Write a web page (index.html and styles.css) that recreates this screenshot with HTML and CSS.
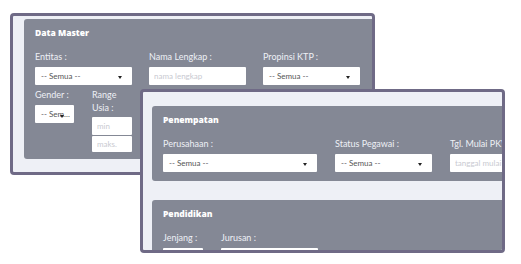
FILE: index.html
```html
<!DOCTYPE html>
<html>
<head>
<meta charset="utf-8">
<title>Filter Karyawan</title>
<link rel="stylesheet" href="styles.css">
</head>
<body>
    <div class="desk">
        <div class="win win1">
            <div class="panel">
                <h3>Data Master</h3>
                <div class="row">
                    <div class="field w97">
                        <label>Entitas :</label>
                        <div class="sel"><span>-- Semua --</span><i></i></div>
                    </div>
                    <div class="field w97">
                        <label>Nama Lengkap :</label>
                        <input type="text" placeholder="nama lengkap">
                    </div>
                    <div class="field w97">
                        <label>Propinsi KTP :</label>
                        <div class="sel"><span>-- Semua --</span><i></i></div>
                    </div>
                </div>
                <div class="row row2">
                    <div class="field gender">
                        <label>Gender :</label>
                        <div class="sel small"><span>-- Sem...</span><i></i></div>
                    </div>
                    <div class="field usia">
                        <label>Range<br>Usia :</label>
                        <input type="text" placeholder="min">
                        <input type="text" placeholder="maks.">
                    </div>
                </div>
            </div>
        </div>
        <div class="win win2">
            <div class="panel">
                <h3>Penempatan</h3>
                <div class="row">
                    <div class="field w154">
                        <label>Perusahaan :</label>
                        <div class="sel"><span>-- Semua --</span><i></i></div>
                    </div>
                    <div class="field w97">
                        <label>Status Pegawai :</label>
                        <div class="sel"><span>-- Semua --</span><i></i></div>
                    </div>
                    <div class="field w97">
                        <label>Tgl. Mulai PKWT :</label>
                        <input type="text" placeholder="tanggal mulai">
                    </div>
                </div>
            </div>
            <div class="panel">
                <h3>Pendidikan</h3>
                <div class="row">
                    <div class="field w40">
                        <label>Jenjang :</label>
                        <input type="text">
                    </div>
                    <div class="field w97">
                        <label>Jurusan :</label>
                        <input type="text">
                    </div>
                </div>
            </div>
        </div>
    </div>
</body>
</html>
```
FILE: styles.css
```css
*{
    box-sizing: border-box;
    font-family: 'Lato', sans-serif;
}
body{
    margin:0;
    background:#fff;
}
.desk{
    position:relative;
    width:521px;
    height:264px;
    overflow:hidden;
}
.win{
    position:absolute;
    background:#eef0f6;
    border:3px solid #6f6a86;
    border-radius:4px;
    overflow:hidden;
}
.win1{
    left:10px;
    top:13px;
    width:365px;
    height:162px;
    padding:3px 0 0 11px;
}
.win2{
    left:140px;
    top:89px;
    width:365px;
    height:164px;
    padding:14px 0 0 9px;
    z-index:2;
}
.panel{
    width:420px;
    background:#848895;
    border-radius:3px;
    padding:8px 0 0 11px;
    color:#f2f2f6;
}
.win1 .panel{
    height:140px;
}
.win2 .panel{
    height:75px;
    margin-bottom:19px;
}
.win2 .panel:last-child{
    height:80px;
}
h3{
    margin:0;
    font-family:'Open Sans', sans-serif;
    font-size:8.5px;
    font-weight:800;
    line-height:12px;
    color:#fff;
}
.row{
    display:flex;
    gap:17px;
    margin-top:11px;
}
.row2{
    margin-top:3px;
    gap:18px;
}
.win2 .row{
    gap:18px;
}
.field{
    display:flex;
    flex-direction:column;
    flex:none;
}
.w97{ width:97px; }
.w154{ width:154px; }
.w40{ width:40px; }
.gender{ width:39px; }
.usia{ width:40px; }
label{
    font-size:9px;
    line-height:13px;
    height:17px;
    white-space:nowrap;
    color:#eef0f5;
}
.usia label{
    height:29px;
    white-space:normal;
}
.sel,input{
    height:18px;
    background:#fff;
    border:none;
    border-radius:1px;
    font-size:8px;
    color:#555;
    outline:none;
}
.sel{
    display:flex;
    align-items:center;
    justify-content:space-between;
    padding:0 10px 0 6px;
    position:relative;
}
.sel i{
    width:0;
    height:0;
    border-left:2.5px solid transparent;
    border-right:2.5px solid transparent;
    border-top:3px solid #222;
    margin-top:2px;
}
.sel.small{
    padding:0 4px 0 6px;
}
.sel.small i{
    position:absolute;
    left:25px;
    top:8px;
}
input{
    padding:0 5px;
    width:100%;
}
input::placeholder{
    color:#c9cad1;
}
.usia input + input{
    margin-top:1px;
    height:16px;
}
```
